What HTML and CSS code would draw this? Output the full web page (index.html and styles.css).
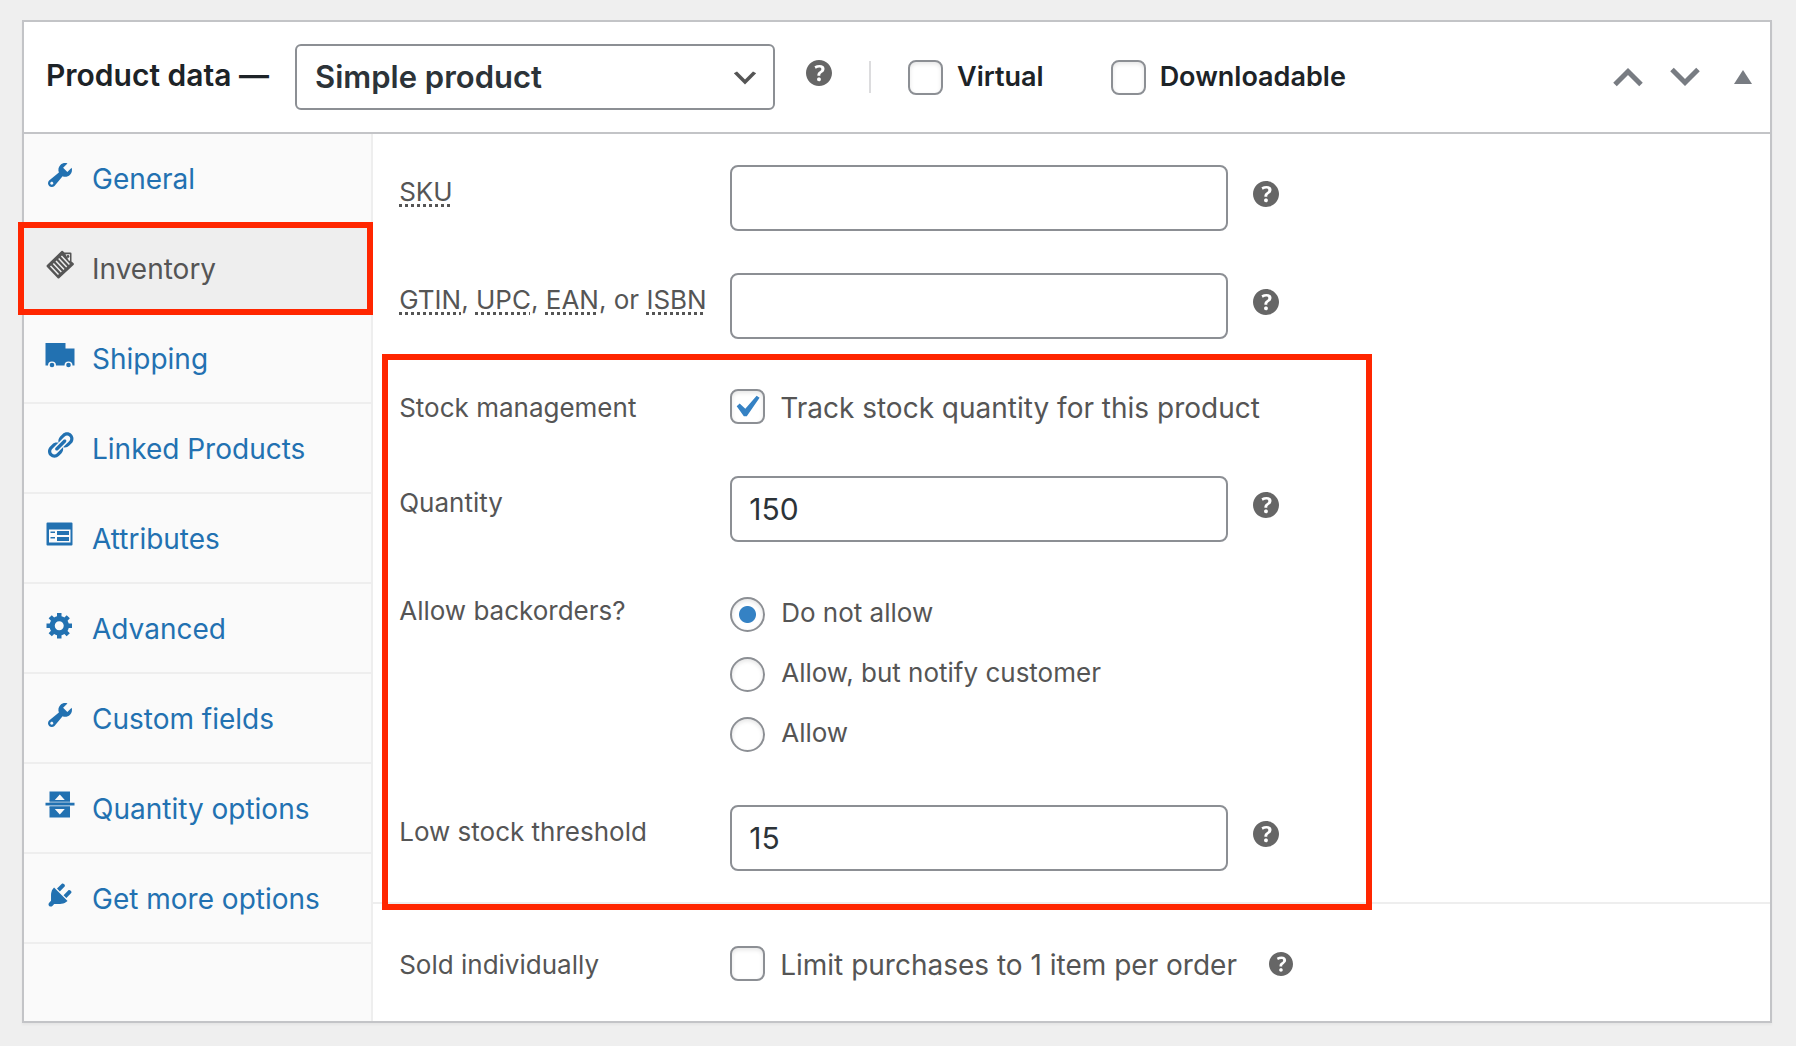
FILE: index.html
```html
<!DOCTYPE html>
<html lang="en">
<head>
<meta charset="utf-8">
<meta name="viewport" content="width=device-width, initial-scale=1">
<title>Product data</title>
<link rel="stylesheet" href="styles.css">
</head>
<body>
<svg class="sprite" aria-hidden="true">
  <symbol id="wrench" viewBox="0 0 20 20"><path d="M16.68 9.77c-1.34 1.34-3.3 1.67-4.95.99l-5.41 6.52c-.99.99-2.59.99-3.58 0s-.99-2.59 0-3.57l6.52-5.42c-.68-1.65-.35-3.61.99-4.95 1.28-1.28 3.12-1.62 4.72-1.06l-2.89 2.89 2.82 2.82 2.86-2.87c.53 1.58.18 3.39-1.08 4.65zM3.81 16.21c.4.39 1.04.39 1.43 0 .4-.4.4-1.04 0-1.43-.39-.4-1.03-.4-1.43 0-.39.39-.39 1.03 0 1.43z"/></symbol>
  <symbol id="help" viewBox="3 3 14 14"><path d="M17 10c0-3.87-3.14-7-7-7-3.87 0-7 3.13-7 7s3.13 7 7 7c3.86 0 7-3.13 7-7zm-6.3 1.48H9.14v-.43c0-.38.08-.7.24-.98s.46-.57.88-.89c.41-.29.68-.53.81-.71.14-.18.2-.39.2-.62 0-.25-.09-.44-.28-.58-.19-.13-.45-.19-.79-.19-.58 0-1.25.19-2 .57l-.64-1.28c.87-.49 1.8-.74 2.77-.74.81 0 1.45.2 1.92.58.48.39.71.91.71 1.55 0 .43-.09.8-.29 1.11-.19.32-.57.67-1.11 1.06-.38.28-.61.49-.71.63-.1.15-.15.34-.15.57v.35zm-1.47 2.74c-.18-.17-.27-.42-.27-.73 0-.33.08-.58.26-.75s.43-.25.77-.25c.32 0 .57.09.75.26s.27.42.27.74c0 .3-.09.55-.27.72-.18.18-.43.27-.75.27-.33 0-.58-.09-.76-.26z"/></symbol>
</svg>

<main class="panel">
  <header class="panel-header">
    <h2 class="panel-title"><label for="product-type">Product data —</label></h2>
    <select class="type-select" id="product-type">
      <option selected>Simple product</option>
    </select>
    <button class="help header-help" type="button" aria-label="Help: product type"><svg><use href="#help"/></svg></button>
    <label class="type-option">
      <input class="check" type="checkbox">Virtual
    </label>
    <label class="type-option">
      <input class="check" type="checkbox">Downloadable
    </label>
    <div class="panel-actions">
      <button class="action" type="button" aria-label="Move up"><svg width="30" height="20" viewBox="0 0 30 20"><path d="M2 17.5 15 4.5 28 17.5" fill="none" stroke="currentColor" stroke-width="5"/></svg></button>
      <button class="action" type="button" aria-label="Move down"><svg width="30" height="20" viewBox="0 0 30 20"><path d="M2 2.5 15 15.500 28 2.500" fill="none" stroke="currentColor" stroke-width="5"/></svg></button>
      <button class="action action-toggle" type="button" aria-label="Toggle panel"><svg width="18" height="14" viewBox="0 0 18 14"><path d="M9 0 18 14H0z" fill="currentColor"/></svg></button>
    </div>
  </header>

  <div class="panel-body">
    <nav class="tabs" aria-label="Product data sections">
      <a class="tab" href="#general"><svg class="tab-icon"><use href="#wrench"/></svg>General</a>
      <a class="tab tab-active" href="#inventory"><svg class="tab-icon" viewBox="0 0 30 30">
        <path fill="currentColor" d="M16.500 1 2 15Q1 16 2 17L12.500 28Q13.500 29 14.500 28L28.500 15Q29.500 14 28.300 13L26.500 11.500V3.500Q26.500 2.500 25.500 2.500H19.500L17.800 1Q17 .5 16.500 1z"/>
        <path fill="#eee" d="M20.500 4.300H25V10.500L24 11z"/>
        <circle cx="23" cy="6.500" r="1.400" fill="currentColor"/>
        <path fill="none" stroke="#eee" stroke-width="1.500" d="M5.500 16 13.500 24.500M8.300 13.500 16.300 22M11 10.900 19 19.400M13.700 8.400 21.700 16.900M16.400 6 24.400 14.500"/>
      </svg>Inventory</a>
      <a class="tab" href="#shipping"><svg class="tab-icon" viewBox="0 0 30 30">
        <path fill="currentColor" d="M.5 3h20v5.500h9v17h-2a4 4 0 0 0-8 0h-8.500a4 4 0 0 0-8 0H.5z"/>
        <circle cx="7" cy="25" r="2.300" fill="currentColor"/><circle cx="23.500" cy="25" r="2.300" fill="currentColor"/>
      </svg>Shipping</a>
      <a class="tab" href="#linked"><svg class="tab-icon" viewBox="0 0 20 20"><path fill="currentColor" d="M17.740 2.760c1.680 1.690 1.680 4.410 0 6.100l-1.530 1.520c-1.120 1.120-2.700 1.470-4.140 1.090l2.620-2.610.76-.77.76-.76c.84-.84.84-2.200 0-3.040-.84-.85-2.200-.85-3.040 0l-.77.76-3.380 3.380c-.37-1.440-.02-3.020 1.100-4.140l1.520-1.530c1.690-1.680 4.420-1.680 6.100 0zM8.590 13.430l5.340-5.340c.42-.42.42-1.100 0-1.520-.44-.43-1.130-.39-1.530 0l-5.330 5.340c-.42.42-.42 1.100 0 1.520.44.43 1.130.39 1.520 0zm-.76 2.290l4.140-4.150c.38 1.440.03 3.020-1.090 4.140l-1.520 1.530c-1.690 1.680-4.410 1.680-6.100 0-1.680-1.680-1.680-4.420 0-6.100l1.530-1.520c1.120-1.120 2.700-1.470 4.140-1.100l-4.140 4.150c-.85.84-.85 2.200 0 3.050.84.84 2.200.84 3.040 0z"/></svg>Linked Products</a>
      <a class="tab" href="#attributes"><svg class="tab-icon" viewBox="0 0 30 30">
        <path fill="currentColor" fill-rule="evenodd" d="M2.500 2.500h24q1 0 1 1v21q0 1-1 1h-24q-1 0-1-1v-21q0-1 1-1zM4 9.500v13h21.500v-13z"/>
        <path fill="currentColor" d="M5.500 11.500h4.500v1.500H5.500zM5.500 17h4.500v1.500H5.500zM12 11h12v4H12zM12 17h12v4H12z"/>
      </svg>Attributes</a>
      <a class="tab" href="#advanced"><svg class="tab-icon" viewBox="0 0 20 20"><path fill="currentColor" d="M18 12h-2.180c-.17.700-.44 1.350-.81 1.930l1.540 1.540-2.100 2.100-1.540-1.540c-.58.360-1.230.630-1.910.790V19H8v-2.180c-.68-.16-1.330-.43-1.910-.79l-1.540 1.540-2.120-2.120 1.540-1.540c-.36-.58-.63-1.230-.79-1.910H1V9.030h2.170c.16-.7.44-1.350.8-1.940L2.430 5.550l2.100-2.100 1.540 1.540c.58-.37 1.240-.64 1.930-.81V2h3v2.180c.68.160 1.330.430 1.910.790l1.540-1.540 2.120 2.120-1.540 1.540c.36.590.64 1.240.8 1.940H18V12zm-8.500 1.500c1.660 0 3-1.340 3-3s-1.340-3-3-3-3 1.340-3 3 1.340 3 3 3z"/></svg>Advanced</a>
      <a class="tab" href="#custom"><svg class="tab-icon"><use href="#wrench"/></svg>Custom fields</a>
      <a class="tab" href="#quantity"><svg class="tab-icon" viewBox="0 0 30 30">
        <path fill="currentColor" fill-rule="evenodd" d="M4.500 1.500h20.500v9.500h-20.500zM14.800 4.500l-5 5.500h10zM.5 12.800h29v2.700H.5zM4.500 17h20.500v10.500h-20.500zM9.800 19h10l-5 5.500z"/>
        <path fill="currentColor" d="M4.500 10.500h20.500v1.300h-20.500zM4.500 16.300h20.500v1.200h-20.500zM4.500 12.600h20.500v1.200h-20.500z"/>
      </svg>Quantity options</a>
      <a class="tab" href="#more"><svg class="tab-icon" viewBox="0 0 20 20"><path fill="currentColor" d="M13.110 4.360L9.870 7.600 8 5.730l3.240-3.240c.35-.34 1.050-.2 1.560.32.52.51.66 1.210.31 1.550zm-8 1.770l.91-1.120 9.010 9.010-1.190.84c-.71.71-2.630 1.160-3.820 1.160H6.140L4.900 17.260c-.59.59-1.540.59-2.120 0-.59-.58-.59-1.530 0-2.120l1.240-1.240v-3.880c0-1.130.4-3.190 1.090-3.890zm7.260 3.970l3.240-3.240c.34-.35 1.040-.21 1.550.31.52.51.66 1.210.31 1.550l-3.240 3.250z"/></svg>Get more options</a>
    </nav>

    <form class="fields">
      <div class="group">
        <div class="row">
          <label class="label" for="sku"><abbr>SKU</abbr></label>
          <div class="control">
            <input class="text" id="sku" type="text">
            <button class="help" type="button" aria-label="Help: SKU"><svg><use href="#help"/></svg></button>
          </div>
        </div>
        <div class="row">
          <label class="label" for="gtin"><abbr>GTIN</abbr>, <abbr>UPC</abbr>, <abbr>EAN</abbr>, or <abbr>ISBN</abbr></label>
          <div class="control">
            <input class="text" id="gtin" type="text">
            <button class="help" type="button" aria-label="Help: global identifier"><svg><use href="#help"/></svg></button>
          </div>
        </div>

        <div class="stock">
          <div class="row row-check">
            <label class="label" for="manage">Stock management</label>
            <div class="control">
              <input class="check" id="manage" type="checkbox" checked>
              <label class="description" for="manage">Track stock quantity for this product</label>
            </div>
          </div>
          <div class="row">
            <label class="label" for="qty">Quantity</label>
            <div class="control">
              <input class="text" id="qty" type="text" inputmode="numeric" value="150">
              <button class="help" type="button" aria-label="Help: quantity"><svg><use href="#help"/></svg></button>
            </div>
          </div>
          <div class="row row-radios" role="radiogroup" aria-labelledby="backorders">
            <span class="label" id="backorders">Allow backorders?</span>
            <div class="radios">
              <label class="radio-option"><input class="radio" type="radio" name="backorders" checked>Do not allow</label>
              <label class="radio-option"><input class="radio" type="radio" name="backorders">Allow, but notify customer</label>
              <label class="radio-option"><input class="radio" type="radio" name="backorders">Allow</label>
            </div>
          </div>
          <div class="row">
            <label class="label" for="low">Low stock threshold</label>
            <div class="control">
              <input class="text" id="low" type="text" inputmode="numeric" value="15">
              <button class="help" type="button" aria-label="Help: low stock threshold"><svg><use href="#help"/></svg></button>
            </div>
          </div>
        </div>
      </div>

      <div class="group group-sold">
        <div class="row row-check">
          <label class="label" for="sold">Sold individually</label>
          <div class="control">
            <input class="check" id="sold" type="checkbox">
            <label class="description" for="sold">Limit purchases to 1 item per order</label>
            <button class="help help-small" type="button" aria-label="Help: sold individually"><svg><use href="#help"/></svg></button>
          </div>
        </div>
      </div>
    </form>
  </div>
</main>
</body>
</html>
```
FILE: styles.css
```css
*, *::before, *::after { box-sizing: border-box; }

body {
  margin: 0;
  padding: 20px 24px 23px 22px;
  background: #efefef;
  color: #555;
  font: 26px/36px Inter, "Liberation Sans", sans-serif;
}

button, input, select { font: inherit; }
button { padding: 0; border: 0; background: none; color: inherit; }
svg { display: block; }
.sprite { display: none; }

.panel {
  background: #fff;
  border: 2px solid #c3c4c7;
  box-shadow: 0 2px 2px rgba(0, 0, 0, .04);
}

/* Header */
.panel-header {
  display: flex;
  align-items: center;
  padding: 22px 18px 22px 22px;
  border-bottom: 2px solid #c3c4c7;
  color: #1d2327;
  font-weight: 600;
}
.panel-title { margin: 0 26px 4px 0; font-size: 30px; font-weight: 600; white-space: nowrap; }
.type-select {
  width: 480px;
  height: 66px;
  padding: 0 60px 0 18px;
  appearance: none;
  border: 2px solid #8c8f94;
  border-radius: 6px;
  background: #fff url("data:image/svg+xml,%3Csvg xmlns='http://www.w3.org/2000/svg' viewBox='0 0 20 20'%3E%3Cpath d='M5 6l5 5 5-5 2 1-7 7-7-7 2-1z' fill='%23555'/%3E%3C/svg%3E") no-repeat right 12px top 16px / 32px 32px;
  color: #2c3338;
  font-size: 31px;
  font-weight: 600;
}
.header-help { margin: 0 37px 8px 31px; }
.type-option { display: flex; align-items: center; gap: 14px; margin-right: 67px; font-size: 27px; }
.header-help + .type-option::before {
  content: "";
  width: 2px;
  height: 32px;
  margin-right: 23px;
  background: #dcdcde;
}
.panel-actions { display: flex; align-items: center; gap: 27px; margin-left: auto; color: #787c82; }
.action-toggle { margin-left: 7px; }

/* Tabs */
.panel-body { display: flex; }
.tabs { flex: 0 0 20%; border-right: 2px solid #eee; background: #fafafa; }
.tab {
  position: relative;
  display: flex;
  gap: 17px;
  height: 90px;
  padding: 27px 21px;
  border-bottom: 2px solid #eee;
  color: #2271b1;
  font-size: 28px;
  text-decoration: none;
  white-space: nowrap;
}
.tab-icon { flex: none; width: 30px; height: 30px; margin-top: -1px; fill: currentColor; }
.tab-active { background: #eee; color: #555; }
.tab-active::after {
  content: "";
  position: absolute;
  inset: -2px -2px -3px -6px;
  border: 6px solid #ff2600;
}

/* Fields */
.fields { flex: 1; min-width: 0; }
.group { padding: 10px 0; }
.group-sold { padding: 13px 0 9px; border-top: 2px solid #eee; }
.row {
  display: grid;
  grid-template-columns: 331px minmax(0, 1fr);
  align-items: start;
  padding: 21px 44px 21px 26px;
}
.label { padding-top: 9px; white-space: nowrap; }
.label abbr { text-decoration: underline dotted 3px; text-underline-offset: 3px; }
.control { display: flex; align-items: flex-start; }
.text {
  width: 50%;
  height: 66px;
  padding: 0 17px;
  border: 2px solid #8c8f94;
  border-radius: 8px;
  background: #fff;
  color: #2c3338;
  font-size: 30px;
}
.help { flex: none; color: #666; }
.help svg { width: 26px; height: 26px; fill: currentColor; }
.control .help { margin: 16px 0 0 25px; }
.control .help-small { margin: 6px 0 0 32px; }
.help-small svg { width: 24px; height: 24px; }

.row-check { padding-top: 29px; padding-bottom: 29px; }
.row-check .label, .description { padding-top: 1px; }
.description { margin-left: 15px; font-size: 28px; white-space: nowrap; }

.check, .radio {
  flex: none;
  width: 35px;
  height: 35px;
  margin: 0;
  appearance: none;
  border: 2px solid #8c8f94;
  border-radius: 8px;
  background: #fff;
  box-shadow: inset 0 2px 4px rgba(0, 0, 0, .1);
}
.check:checked {
  background: #fff url("data:image/svg+xml,%3Csvg xmlns='http://www.w3.org/2000/svg' viewBox='0 0 20 20'%3E%3Cpath d='M14.83 4.89l1.34.94-5.81 8.38H9.02L5.78 9.67l1.34-1.25 2.57 2.4z' fill='%233582c4'/%3E%3C/svg%3E") no-repeat -8px -6px / 44px 44px;
}
.radio { margin-top: 2px; border-radius: 50%; }
.radio:checked { background: radial-gradient(circle, #3582c4 8px, #fff 9px); }

.row-radios { padding-top: 30px; padding-bottom: 31px; }
.row-radios .label { padding-top: 0; }
.radios { display: grid; gap: 20px; }
.radio-option { display: flex; align-items: center; gap: 16px; height: 40px; }

/* Callout round the stock settings */
.stock { position: relative; }
.stock::after {
  content: "";
  position: absolute;
  inset: -6px 398px -18px 9px;
  border: 6px solid #ff2600;
  pointer-events: none;
}
```
